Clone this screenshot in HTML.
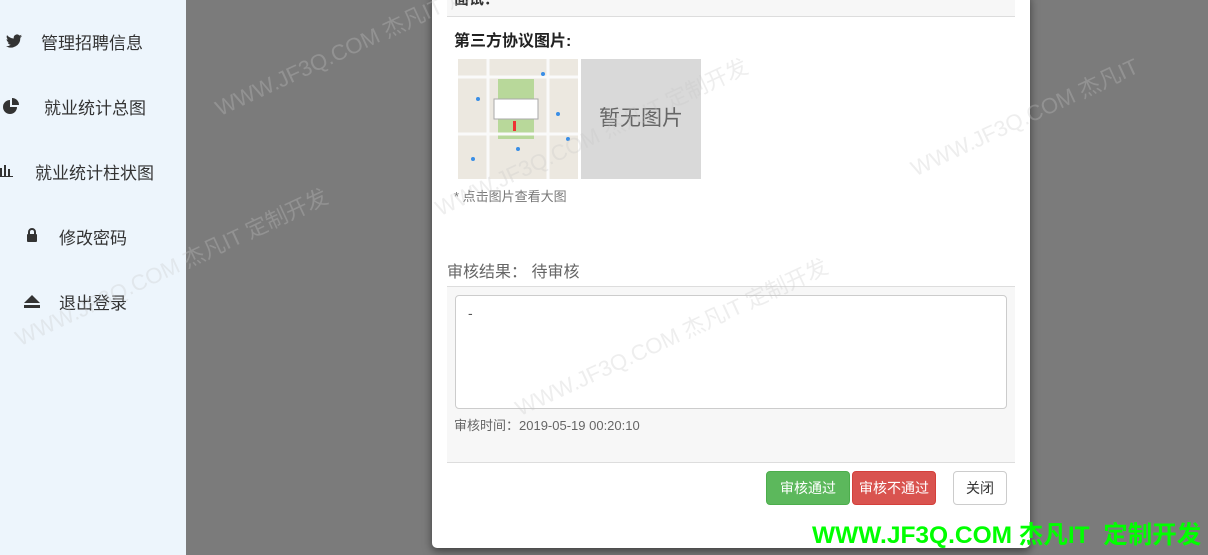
<!DOCTYPE html>
<html><head><meta charset="utf-8"><style>
body{margin:0;width:1208px;height:555px;overflow:hidden;background:#7b7b7b;font-family:"Liberation Sans","Noto Sans CJK SC",sans-serif;position:relative}
.side{position:absolute;left:0;top:0;width:186px;height:555px;background:#edf5fc}
.it{position:absolute;font-size:17px;color:#333;white-space:nowrap}
.modal{position:absolute;left:432px;top:-6px;width:598px;height:554px;background:#fff;border-radius:5px;box-shadow:0 3px 9px rgba(0,0,0,.5)}
.a{position:absolute}
.btn{position:absolute;top:477px;height:32px;line-height:32px;font-size:14px;border-radius:4px;text-align:center;color:#fff}
.wm{position:absolute;color:rgba(200,200,200,.3);font-size:22px;transform:rotate(-25deg);white-space:nowrap}
</style></head><body>
<div class="side">
<svg class="a" style="left:6px;top:34px" width="16" height="14" viewBox="0 0 16 14"><path d="M16 2c-.6.3-1.2.4-1.9.5.7-.4 1.2-1 1.4-1.8-.6.4-1.3.6-2.1.8A3.3 3.3 0 0 0 7.8 4.500C5.1 4.400 2.700 3.100 1.100 1.100c-.9 1.500-.4 3.400 1 4.400-.5 0-1-.2-1.500-.4 0 1.600 1.100 3 2.600 3.300-.5.1-1 .2-1.500.1.400 1.300 1.700 2.300 3.100 2.300A6.600 6.600 0 0 1 0 12.100 9.300 9.300 0 0 0 14.300 3.800c.7-.5 1.300-1.100 1.700-1.800z" fill="#333"/></svg>
<div class="it" style="left:41px;top:29px">管理招聘信息</div>
<svg class="a" style="left:3px;top:98px" width="16" height="16" viewBox="0 0 16 16"><path d="M7 2a7 7 0 1 0 7 7H7z" fill="#333"/><path d="M9 0v7h7A7 7 0 0 0 9 0z" fill="#333"/></svg>
<div class="it" style="left:44px;top:94px">就业统计总图</div>
<svg class="a" style="left:0;top:165px" width="13" height="12"><rect x="0" y="3" width="2" height="8" fill="#333"/><rect x="4" y="0" width="2" height="11" fill="#333"/><rect x="8" y="4" width="2" height="7" fill="#333"/><rect x="0" y="11" width="13" height="1" fill="#333"/></svg>
<div class="it" style="left:35px;top:159px">就业统计柱状图</div>
<svg class="a" style="left:26px;top:228px" width="12" height="14" viewBox="0 0 12 14"><path d="M3 6V4a3 3 0 0 1 6 0v2" stroke="#333" stroke-width="2" fill="none"/><rect x="1" y="6" width="10" height="8" rx="1" fill="#333"/></svg>
<div class="it" style="left:59px;top:224px">修改密码</div>
<svg class="a" style="left:24px;top:295px" width="16" height="14"><path d="M8 0L16 8H0z" fill="#333"/><rect y="10" width="16" height="3" fill="#333"/></svg>
<div class="it" style="left:59px;top:289px">退出登录</div>
</div>
<div class="modal">
<div class="a" style="left:15px;top:0;width:568px;height:22px;background:#f7f7f7;border-bottom:1px solid #ddd"></div>
<div class="a" style="left:22px;top:0;font-size:15px;font-weight:bold;color:#333;line-height:12px">面试：</div>
<div class="a" style="left:22px;top:33px;font-size:16px;font-weight:bold;color:#222">第三方协议图片:</div>
<svg class="a" style="left:26px;top:65px" width="120" height="120"><rect width="120" height="120" fill="#ece8e0"/><rect x="40" y="20" width="36" height="60" fill="#b8d89a"/><rect x="36" y="40" width="44" height="20" fill="#fff" stroke="#aaa"/><path d="M0 18H120M0 75H120M30 0V120M90 0V120" stroke="#fafafa" stroke-width="3"/><rect x="55" y="62" width="3" height="10" fill="#e33"/><g fill="#3a8ee6"><circle cx="85" cy="15" r="2"/><circle cx="20" cy="40" r="2"/><circle cx="100" cy="55" r="2"/><circle cx="60" cy="90" r="2"/><circle cx="110" cy="80" r="2"/><circle cx="15" cy="100" r="2"/></g></svg>
<div class="a" style="left:149px;top:65px;width:120px;height:120px;background:#d9d9d9;color:#666;font-size:21px;line-height:120px;text-align:center">暂无图片</div>
<div class="a" style="left:22px;top:192px;font-size:13px;color:#777">* 点击图片查看大图</div>
<div class="a" style="left:15px;top:264px;font-size:16px;color:#666">审核结果： 待审核</div>
<div class="a" style="left:15px;top:292px;width:568px;height:175px;background:#f7f7f7;border-top:1px solid #ddd;border-bottom:1px solid #ddd"></div>
<div class="a" style="left:23px;top:301px;width:552px;height:114px;background:#fff;border:1px solid #ccc;border-radius:4px;font-size:14px;color:#555;padding:0 12px;box-sizing:border-box;line-height:34px">-</div>
<div class="a" style="left:22px;top:421px;font-size:13px;color:#666">审核时间：2019-05-19 00:20:10</div>
<div class="btn" style="left:334px;width:82px;background:#5cb85c;border:1px solid #4cae4c">审核通过</div>
<div class="btn" style="left:420px;width:82px;background:#d9534f;border:1px solid #d43f3a">审核不通过</div>
<div class="btn" style="left:521px;width:52px;background:#fff;border:1px solid #ccc;color:#333">关闭</div>
</div>
<div class="wm" style="left:200px;top:20px">WWW.JF3Q.COM 杰凡IT 定制开发</div>
<div class="wm" style="left:420px;top:120px">WWW.JF3Q.COM 杰凡IT 定制开发</div>
<div class="wm" style="left:0px;top:250px">WWW.JF3Q.COM 杰凡IT 定制开发</div>
<div class="wm" style="left:500px;top:320px">WWW.JF3Q.COM 杰凡IT 定制开发</div>
<div class="wm" style="left:900px;top:100px">WWW.JF3Q.COM 杰凡IT</div>
<div class="a" style="left:812px;top:521px;font-size:24.5px;font-weight:bold;color:#00ff00;white-space:nowrap;line-height:30px">WWW.JF3Q.COM 杰凡IT&nbsp; 定制开发</div>
</body></html>
